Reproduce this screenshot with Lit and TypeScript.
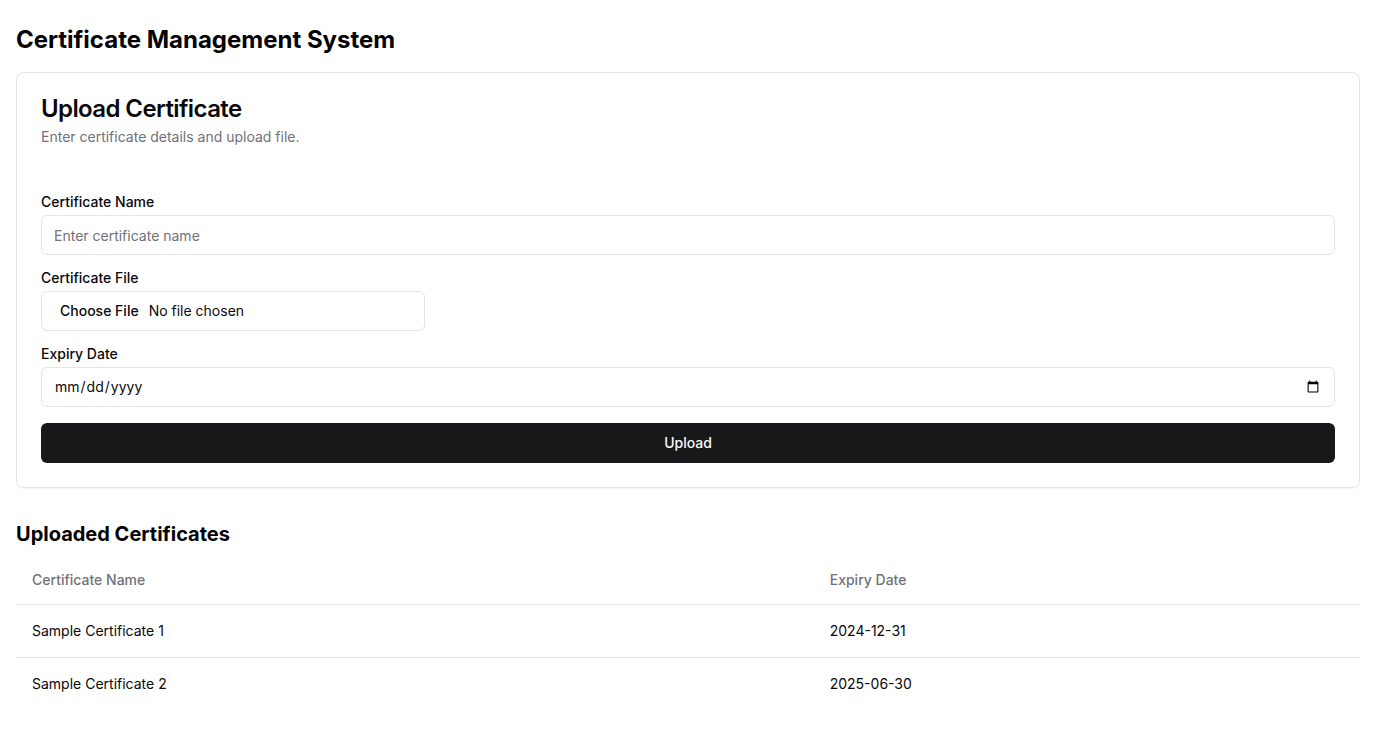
import { LitElement, html, css } from "lit";
import { customElement, state } from "lit/decorators.js";

interface Certificate {
  name: string;
  expiry: string;
}

@customElement("app-root")
export class AppRoot extends LitElement {
  @state() private certificates: Certificate[] = [
    { name: "Sample Certificate 1", expiry: "2024-12-31" },
    { name: "Sample Certificate 2", expiry: "2025-06-30" },
  ];

  static styles = css`
    :host {
      display: block;
      font-family: Inter, sans-serif;
      font-size: 16px;
      line-height: 24px;
      color: #000;
      background: #fff;
    }
    *, *::before, *::after { box-sizing: border-box; }
    h1, h2, p { margin: 0; }
    .page { padding: 24px 16px; }
    .title { font-size: 24px; line-height: 32px; font-weight: 700; margin-bottom: 16px; }
    .card {
      border: 1px solid #e4e4e7;
      border-radius: 8px;
      box-shadow: 0 1px 2px rgba(0, 0, 0, 0.05);
      color: #09090b;
      margin-bottom: 32px;
    }
    .card-header { display: flex; flex-direction: column; gap: 6px; padding: 24px; }
    .card-title { font-size: 24px; line-height: 24px; font-weight: 600; letter-spacing: -0.025em; }
    .card-description { font-size: 14px; line-height: 20px; color: #71717a; }
    .form { display: flex; flex-direction: column; gap: 16px; padding: 24px; }
    .field { display: flex; flex-direction: column; gap: 6px; }
    .label { font-size: 14px; line-height: 14px; font-weight: 500; }
    .input {
      width: 100%;
      height: 40px;
      padding: 8px 12px;
      border: 1px solid #e4e4e7;
      border-radius: 6px;
      background: #fff;
      color: #09090b;
      font: inherit;
      font-size: 14px;
      line-height: 20px;
    }
    .input::placeholder { color: #71717a; opacity: 1; }
    .file { max-width: 384px; }
    .file::file-selector-button {
      border: 0;
      background: transparent;
      font: inherit;
      font-weight: 500;
      color: inherit;
    }
    .button {
      height: 40px;
      border: 0;
      border-radius: 6px;
      background: #18181b;
      color: #fafafa;
      font: inherit;
      font-size: 14px;
      line-height: 20px;
      font-weight: 500;
      cursor: pointer;
    }
    .section-title { font-size: 20px; line-height: 28px; font-weight: 700; margin-bottom: 8px; }
    .table { width: 100%; border-collapse: collapse; font-size: 14px; line-height: 20px; }
    .head { height: 48px; padding: 0 16px; text-align: left; font-weight: 500; color: #71717a; }
    .cell { padding: 16px; color: #09090b; }
    .row { border-bottom: 1px solid #e4e4e7; }
    .body .row:last-child { border-bottom: 0; }
  `;

  render() {
    return html`
      <main class="page">
        <h1 class="title">Certificate Management System</h1>
        <section class="card">
          <div class="card-header">
            <h2 class="card-title">Upload Certificate</h2>
            <p class="card-description">Enter certificate details and upload file.</p>
          </div>
          <form class="form" @submit=${(e: Event) => e.preventDefault()}>
            <div class="field">
              <label class="label" for="name">Certificate Name</label>
              <input class="input" id="name" type="text" placeholder="Enter certificate name" />
            </div>
            <div class="field">
              <label class="label" for="file">Certificate File</label>
              <input class="input file" id="file" type="file" />
            </div>
            <div class="field">
              <label class="label" for="expiry">Expiry Date</label>
              <input class="input" id="expiry" type="date" />
            </div>
            <button class="button" type="submit">Upload</button>
          </form>
        </section>
        <h2 class="section-title">Uploaded Certificates</h2>
        <table class="table">
          <thead>
            <tr class="row">
              <th class="head" scope="col">Certificate Name</th>
              <th class="head" scope="col">Expiry Date</th>
            </tr>
          </thead>
          <tbody class="body">
            ${this.certificates.map(
              (c) => html`<tr class="row">
                <td class="cell">${c.name}</td>
                <td class="cell">${c.expiry}</td>
              </tr>`
            )}
          </tbody>
        </table>
      </main>
    `;
  }
}
